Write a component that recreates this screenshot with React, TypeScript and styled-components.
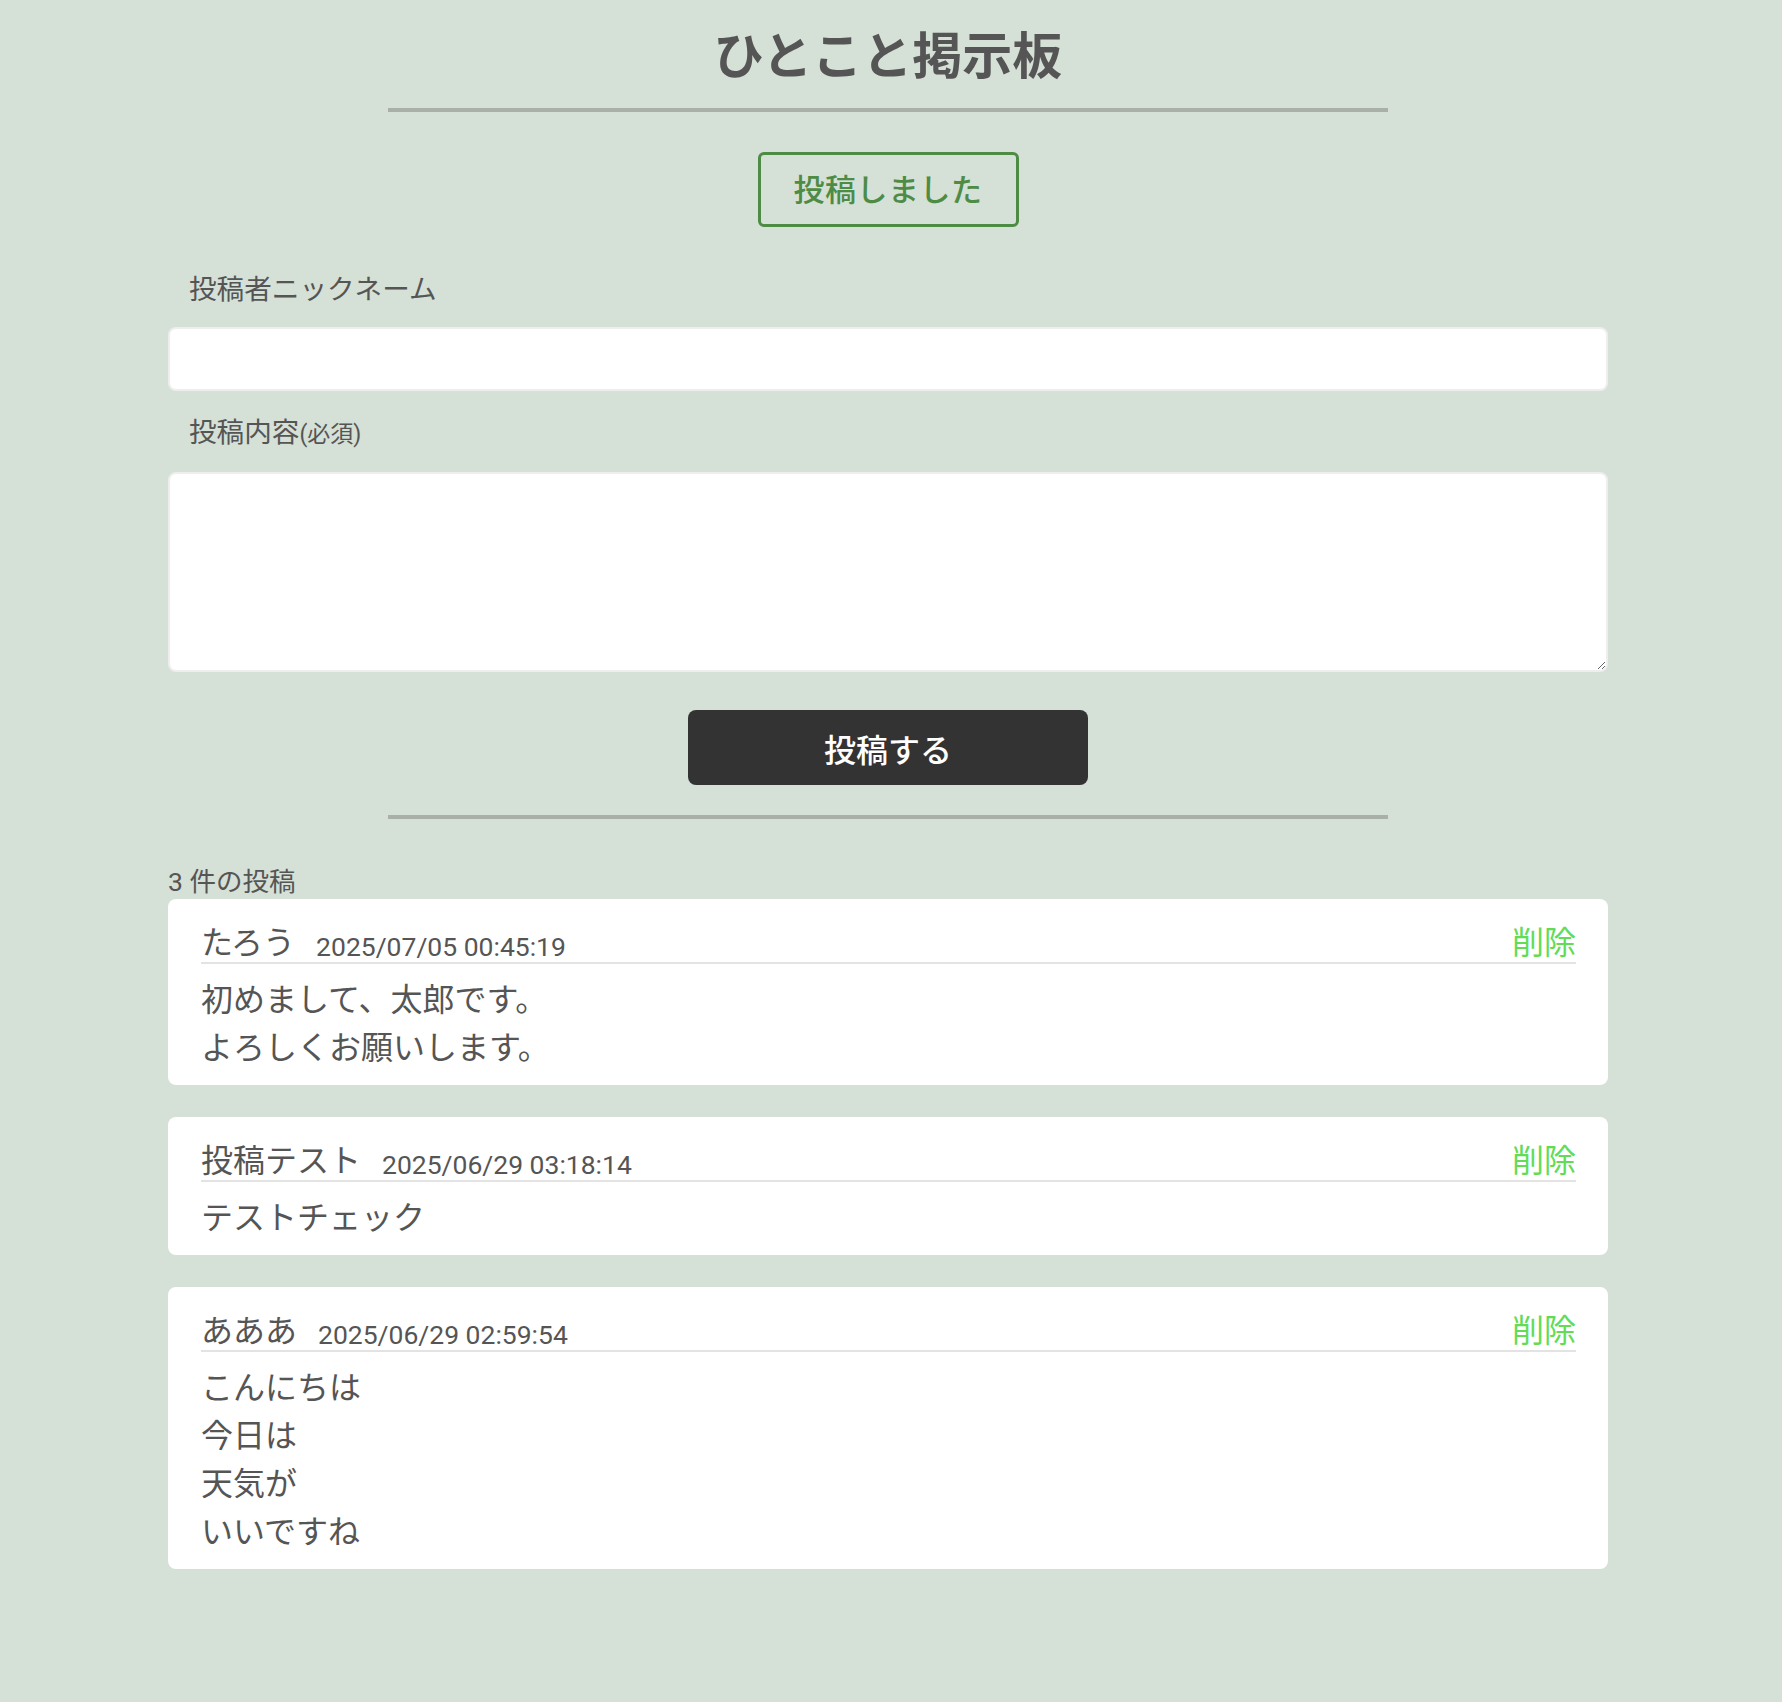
import React from "react";
import styled, { createGlobalStyle } from "styled-components";

const GlobalStyle = createGlobalStyle`
  html, body {
    margin: 0;
    padding: 0;
    background: #d5e0d6;
  }
  body {
    font-family: Roboto, "Noto Sans CJK JP", sans-serif;
    color: #555555;
  }
  * { box-sizing: border-box; }
`;

const Page = styled.div`
  min-height: 1702px;
  padding: 15px 6px 40px 0;
`;

const Container = styled.main`
  width: 1440px;
  margin: 0 auto;
  display: flex;
  flex-direction: column;
`;

const Title = styled.h1`
  margin: 0;
  text-align: center;
  font-size: 50px;
  line-height: 74px;
  font-weight: 700;
  color: #555555;
  font-family: "Noto Sans CJK JP", sans-serif;
`;

const Rule = styled.hr<{ $top: number; $bottom: number }>`
  width: 1000px;
  height: 4px;
  margin: ${(p) => p.$top}px auto ${(p) => p.$bottom}px;
  border: none;
  background: #a9b0a8;
`;

const Flash = styled.div`
  align-self: center;
  border: 3px solid #4e8b45;
  border-radius: 6px;
  padding: 12px 33px 10px;
  font-size: 31px;
  line-height: 47px;
  font-weight: 500;
  color: #4e8b45;
  letter-spacing: 0.5px;
`;

const Form = styled.form`
  display: flex;
  flex-direction: column;
  margin-top: 42px;
`;

const Label = styled.label`
  padding-left: 21px;
  font-size: 27.6px;
  line-height: 41px;
  color: #555555;
`;

const Small = styled.span`
  font-size: 23px;
`;

const fieldBase = `
  display: block;
  width: 100%;
  background: #ffffff;
  border: 2px solid #eeeeee;
  border-radius: 8px;
  font-family: Roboto, "Noto Sans CJK JP", sans-serif;
  font-size: 28px;
  color: #333;
  padding: 10px 16px;
  outline: none;
`;

const Input = styled.input`
  ${fieldBase}
  height: 64px;
  margin: 17px 0 21px;
`;

const TextArea = styled.textarea`
  ${fieldBase}
  height: 200px;
  margin-top: 17px;
  resize: vertical;
`;

const SubmitButton = styled.button`
  align-self: center;
  width: 400px;
  height: 75px;
  margin-top: 38px;
  border: none;
  border-radius: 8px;
  background: #333333;
  color: #ffffff;
  font-family: Roboto, "Noto Sans CJK JP", sans-serif;
  font-size: 32px;
  font-weight: 500;
  cursor: pointer;
`;

const Count = styled.div`
  font-size: 26.5px;
  line-height: 31px;
  margin-top: 47px;
  margin-bottom: 2px;
  color: #555555;
`;

const List = styled.ul`
  list-style: none;
  margin: 0;
  padding: 0;
  display: flex;
  flex-direction: column;
  gap: 32px;
`;

const Card = styled.li`
  background: #ffffff;
  border-radius: 8px;
  padding: 18px 32px 13px 33px;
`;

const CardHeader = styled.div`
  display: flex;
  align-items: baseline;
  border-bottom: 2px solid #e3e3e3;
  height: 47px;
`;

const Name = styled.span`
  font-size: 32px;
  line-height: 45px;
  color: #555555;
`;

const DateText = styled.span`
  margin-left: 21px;
  font-size: 26.5px;
  color: #555555;
  position: relative;
  top: 2px;
`;

const DeleteLink = styled.a`
  margin-left: auto;
  font-size: 32px;
  color: #62dc55;
  text-decoration: none;
  cursor: pointer;
`;

const Body = styled.p`
  margin: 12px 0 0;
  font-size: 32px;
  line-height: 48px;
  color: #555555;
  white-space: pre-line;
`;

type Post = { name: string; date: string; body: string };

const posts: Post[] = [
  {
    name: "たろう",
    date: "2025/07/05 00:45:19",
    body: "初めまして、太郎です。\nよろしくお願いします。",
  },
  { name: "投稿テスト", date: "2025/06/29 03:18:14", body: "テストチェック" },
  {
    name: "あああ",
    date: "2025/06/29 02:59:54",
    body: "こんにちは\n今日は\n天気が\nいいですね",
  },
];

export default function App() {
  return (
    <>
      <GlobalStyle />
      <Page>
        <Container>
          <Title>ひとこと掲示板</Title>
          <Rule $top={19} $bottom={40} />
          <Flash>投稿しました</Flash>
          <Form onSubmit={(e) => e.preventDefault()}>
            <Label htmlFor="nickname">投稿者ニックネーム</Label>
            <Input id="nickname" type="text" />
            <Label htmlFor="content">
              投稿内容<Small>(必須)</Small>
            </Label>
            <TextArea id="content" />
            <SubmitButton type="submit">投稿する</SubmitButton>
          </Form>
          <Rule $top={30} $bottom={0} />
          <Count>3 件の投稿</Count>
          <List>
            {posts.map((p) => (
              <Card key={p.date}>
                <CardHeader>
                  <Name>{p.name}</Name>
                  <DateText>{p.date}</DateText>
                  <DeleteLink>削除</DeleteLink>
                </CardHeader>
                <Body>{p.body}</Body>
              </Card>
            ))}
          </List>
        </Container>
      </Page>
    </>
  );
}
